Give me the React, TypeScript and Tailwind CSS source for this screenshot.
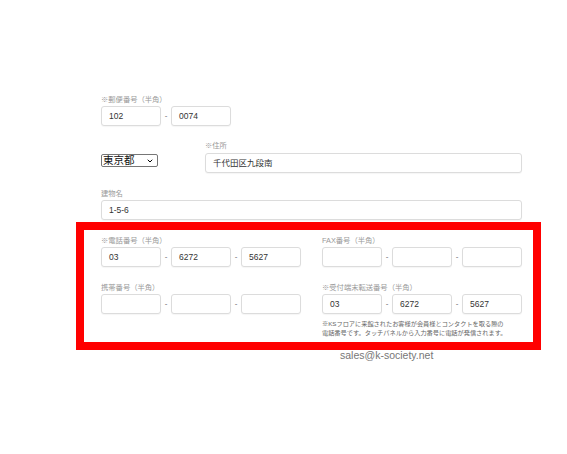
import React from "react";
import { ChevronDown } from "lucide-react";

const font = {
  fontFamily: '"Liberation Sans", "Noto Sans CJK JP", sans-serif',
};

const Label = ({ text, className = "" }: { text: string; className?: string }) => (
  <div className={`h-[10px] text-[7.3px] leading-[10px] text-[#999] whitespace-nowrap ${className}`}>
    {text}
  </div>
);

const Field = ({ value = "", className = "w-[60px]" }: { value?: string; className?: string }) => (
  <div
    className={`${className} h-[20px] shrink-0 rounded-[3px] border border-[#dcdcdc] bg-white px-[7px] text-[8.5px] leading-[18px] text-[#333] shadow-[0_1px_1px_rgba(0,0,0,0.04)]`}
  >
    {value}
  </div>
);

const Dash = () => (
  <div className="w-[10px] shrink-0 text-center text-[8px] leading-[20px] text-[#666]">-</div>
);

const TripleField = ({ label, values }: { label: string; values: string[] }) => (
  <div className="w-[200px]">
    <Label text={label} className="mb-[1px]" />
    <div className="flex">
      <Field value={values[0]} />
      <Dash />
      <Field value={values[1]} />
      <Dash />
      <Field value={values[2]} />
    </div>
  </div>
);

export default function App() {
  return (
    <div className="relative h-[454px] w-[567px] overflow-hidden bg-white" style={font}>
      <div className="flex w-[522px] flex-col pl-[101px] pt-[95px]">
        {/* 郵便番号 */}
        <div>
          <Label text="※郵便番号（半角）" className="mb-[1px]" />
          <div className="flex">
            <Field value="102" />
            <Dash />
            <Field value="0074" />
          </div>
        </div>

        {/* 都道府県 / 住所 */}
        <div className="mt-[15px] flex">
          <div className="w-[104px] shrink-0 pt-[13px]">
            <div className="flex h-[13px] w-[57px] items-center justify-between rounded-[2px] border border-[#767676] bg-white pl-[1px] pr-[3px]">
              <span className="text-[10.5px] leading-[11px] text-[#111]">東京都</span>
              <ChevronDown size={8} strokeWidth={3} className="text-black" />
            </div>
          </div>
          <div className="flex-1">
            <Label text="※住所" className="mb-[2px]" />
            <Field value="千代田区九段南" className="w-full" />
          </div>
        </div>

        {/* 建物名 */}
        <div className="mt-[16px]">
          <Label text="建物名" className="mb-[1px]" />
          <Field value="1-5-6" className="w-full" />
        </div>

        {/* 電話 / FAX */}
        <div className="mt-[16px] flex gap-[21px]">
          <TripleField label="※電話番号（半角）" values={["03", "6272", "5627"]} />
          <TripleField label="FAX番号（半角）" values={["", "", ""]} />
        </div>

        {/* 携帯 / 受付端末 */}
        <div className="mt-[16px] flex gap-[21px]">
          <TripleField label="携帯番号（半角）" values={["", "", ""]} />
          <div>
            <TripleField label="※受付端末転送番号（半角）" values={["03", "6272", "5627"]} />
            <p className="mt-[5px] whitespace-nowrap text-[6.2px] leading-[9px] text-[#666]">
              ※KSフロアに来館されたお客様が会員様とコンタクトを取る際の
              <br />
              電話番号です。タッチパネルから入力番号に電話が発信されます。
            </p>
          </div>
        </div>

        <div className="mt-[12px] whitespace-nowrap pl-[239px] text-[10.5px] leading-[12px] text-[#777]">
          sales@k-society.net
        </div>
      </div>

      {/* 注記枠 */}
      <div className="absolute left-[76px] top-[222px] h-[128px] w-[465px] border-[8px] border-[#ff0000]" />
    </div>
  );
}
